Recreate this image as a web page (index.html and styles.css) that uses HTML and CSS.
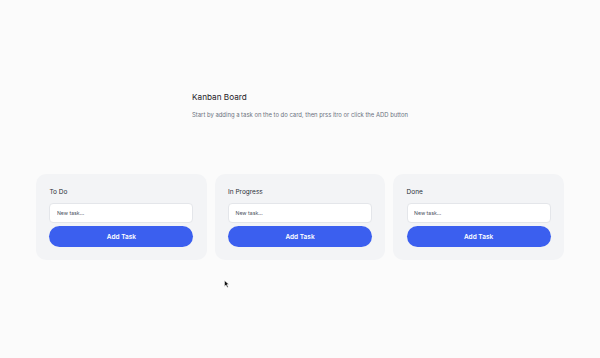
FILE: index.html
```html
<!DOCTYPE html>
<html lang="en">
<head>
<meta charset="utf-8">
<title>Kanban Board</title>
<link rel="stylesheet" href="styles.css">
</head>
<body>
<main class="page">
  <header class="intro">
    <div class="intro-inner">
      <h1 class="title">Kanban Board</h1>
      <p class="subtitle">Start by adding a task on the to do card, then prss itro or click the ADD button</p>
    </div>
  </header>
  <section class="board">
    <div class="column">
      <h2 class="column-title">To Do</h2>
      <input class="task-input" type="text" placeholder="New task...">
      <button class="add-btn">Add Task</button>
    </div>
    <div class="column">
      <h2 class="column-title">In Progress</h2>
      <input class="task-input" type="text" placeholder="New task...">
      <button class="add-btn">Add Task</button>
    </div>
    <div class="column">
      <h2 class="column-title">Done</h2>
      <input class="task-input" type="text" placeholder="New task...">
      <button class="add-btn">Add Task</button>
    </div>
  </section>
  <svg class="cursor" width="6" height="8" viewBox="0 0 12 16" aria-hidden="true">
    <path d="M1 1 L1 13 L4 10 L6.5 15 L8.5 14 L6 9 L10 9 Z" fill="#111" stroke="#fff" stroke-width="1"/>
  </svg>
</main>
</body>
</html>
```

FILE: styles.css
```css
* { box-sizing: border-box; }
html, body { margin: 0; padding: 0; }
body {
  background: #fbfbfb;
  font-family: Inter, "Noto Sans", sans-serif;
  width: 600px;
  height: 358px;
  overflow: hidden;
}
.page {
  position: relative;
  height: 358px;
  padding-top: 91px;
}
.intro {
  display: flex;
  justify-content: center;
}
.intro-inner {
  display: flex;
  flex-direction: column;
  gap: 7.35px;
}
.title {
  margin: 0;
  font-size: 8.2px;
  line-height: 12px;
  font-weight: 400;
  color: #1f2329;
}
.subtitle {
  margin: 0;
  font-size: 5.9px;
  line-height: 9px;
  color: #6b7280;
}
.board {
  margin: 54.65px 36px 0;
  display: grid;
  grid-template-columns: repeat(3, 1fr);
  gap: 7.8px;
}
.column {
  background: #f3f4f6;
  border-radius: 10px;
  padding: 13px 13.4px 13px;
  display: flex;
  flex-direction: column;
}
.column-title {
  margin: 0 0 6px;
  font-size: 6.5px;
  line-height: 10px;
  font-weight: 400;
  color: #2b2f36;
}
.task-input {
  height: 20px;
  border: 0.6px solid #e4e6ea;
  border-radius: 4px;
  background: #ffffff;
  padding: 0 6.5px;
  font-family: inherit;
  font-size: 5.2px;
  color: #374151;
  outline: none;
}
.task-input::placeholder { color: #4b5260; }
.add-btn {
  margin-top: 3.4px;
  height: 20.6px;
  border: none;
  border-radius: 999px;
  background: #3b5fef;
  color: #ffffff;
  font-family: inherit;
  font-size: 6.5px;
  font-weight: 600;
  padding: 0;
}
.cursor {
  position: absolute;
  left: 223.5px;
  top: 279.5px;
}
```
